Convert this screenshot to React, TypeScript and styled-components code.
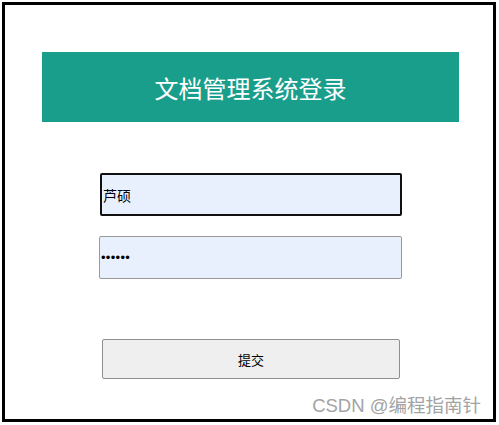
import React from "react";
import styled, { createGlobalStyle } from "styled-components";

const GlobalStyle = createGlobalStyle`
  html, body {
    margin: 0;
    padding: 0;
    background: #ffffff;
  }
  body {
    font-family: "Liberation Sans", "Noto Sans CJK SC", sans-serif;
  }
`;

const Frame = styled.div`
  position: relative;
  box-sizing: border-box;
  width: 494px;
  height: 420px;
  margin: 2px 0 0 2px;
  border: 3px solid #000000;
  background: #ffffff;
  display: flex;
  flex-direction: column;
  align-items: flex-start;
`;

const Header = styled.div`
  box-sizing: border-box;
  width: 417px;
  height: 70px;
  margin: 47px 0 0 37px;
  background: #1a9e8c;
  display: flex;
  align-items: center;
  justify-content: center;
  color: #ffffff;
  font-family: "Noto Sans CJK SC", sans-serif;
  font-size: 24px;
`;

const Form = styled.form`
  display: flex;
  flex-direction: column;
  align-items: flex-start;
  margin: 51px 0 0 94px;
`;

const Field = styled.input<{ $focused?: boolean }>`
  box-sizing: border-box;
  height: 43px;
  margin: 0 0 20px ${(p) => (p.$focused ? "1px" : "0")};
  width: ${(p) => (p.$focused ? "302px" : "303px")};
  padding: 0 1px;
  background: #e8f0fe;
  border: ${(p) => (p.$focused ? "2px solid #111111" : "1px solid #9a9a9a")};
  border-radius: 2px;
  outline: none;
  font-family: "Noto Sans CJK SC", sans-serif;
  font-size: 14px;
  color: #000000;

  &[type="password"] {
    font-family: "Liberation Sans", sans-serif;
    font-size: 13px;
    letter-spacing: 0.3px;
  }
`;

const Submit = styled.button`
  box-sizing: border-box;
  width: 298px;
  height: 40px;
  margin: 40px 0 0 3px;
  background: #efefef;
  border: 1px solid #8f8f8f;
  border-radius: 2px;
  font-family: "Noto Sans CJK SC", sans-serif;
  font-size: 13px;
  color: #000000;
`;

const Watermark = styled.div`
  position: absolute;
  right: 12px;
  bottom: 2px;
  color: #a3a3a3;
  font-family: "Liberation Sans", "Noto Sans CJK SC", sans-serif;
  font-size: 18.5px;
  white-space: nowrap;
`;

export default function App() {
  return (
    <>
      <GlobalStyle />
      <Frame>
        <Header>文档管理系统登录</Header>
        <Form onSubmit={(e) => e.preventDefault()}>
          <Field $focused type="text" defaultValue="芦硕" />
          <Field type="password" defaultValue="123456" />
          <Submit type="submit">提交</Submit>
        </Form>
        <Watermark>CSDN @编程指南针</Watermark>
      </Frame>
    </>
  );
}
